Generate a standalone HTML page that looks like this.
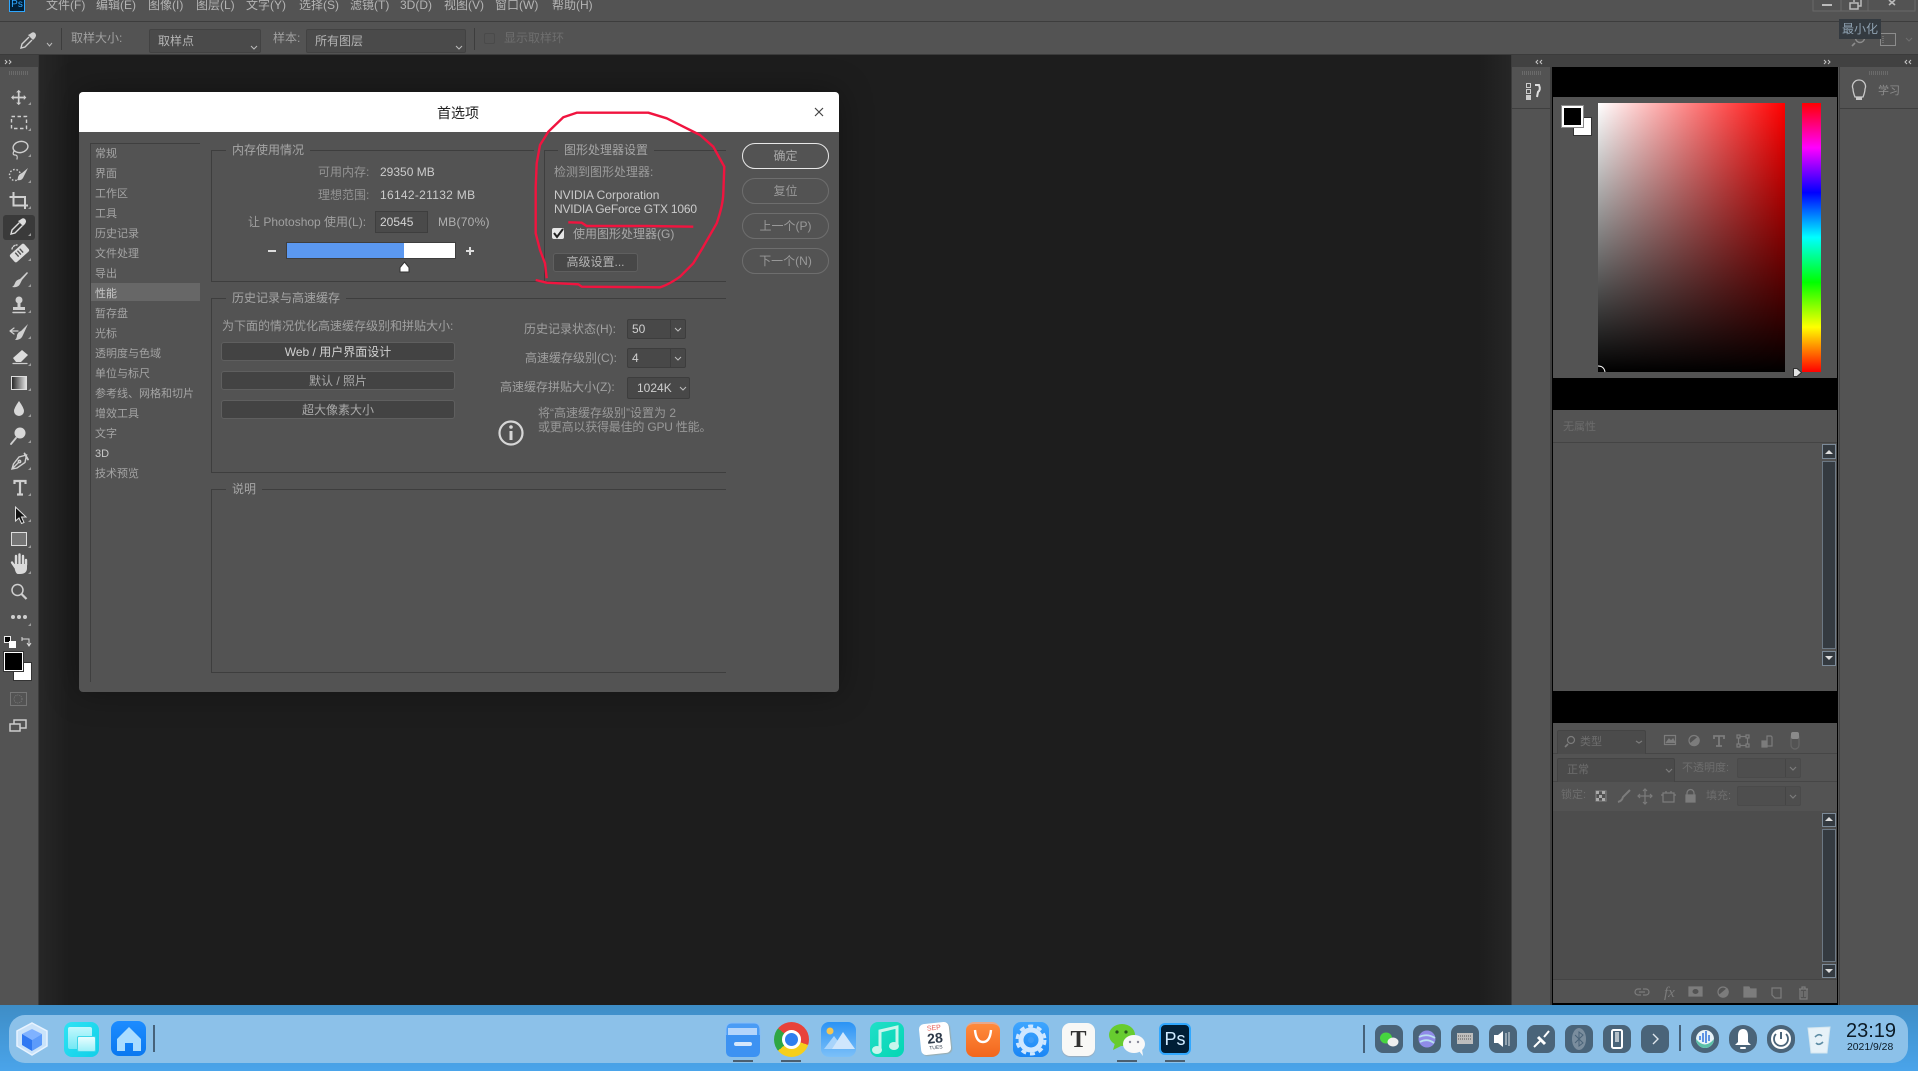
<!DOCTYPE html>
<html lang="zh"><head><meta charset="utf-8"><title>首选项</title>
<style>
html,body{margin:0;padding:0;width:1918px;height:1071px;overflow:hidden;background:#1e1e1e}
body{font-family:"Liberation Sans","Noto Sans CJK SC",sans-serif;font-size:12px;color:#a8a8a8;position:relative}
div{box-sizing:border-box}
.a{position:absolute}
.t{position:absolute;white-space:nowrap;line-height:16px;height:16px}
.m{color:#b4b4b4;top:-3px;font-size:12px}
.b{color:#cbcbcb}
.d{color:#6e6e6e}
.li{left:95px;font-size:11px;color:#a4a4a4;margin-top:1px}
.box{position:absolute;border:1px solid #3e3e3e;border-right:0}
.lg{background:#535353;padding:0 6px;color:#a6a6a6}
.btn{position:absolute;left:742px;width:87px;height:26px;border:1px solid #6e6e6e;border-radius:13px;text-align:center;line-height:24px;color:#999;font-size:12px}
.pb{position:absolute;left:221px;width:234px;height:19px;background:#434343;border:1px solid #5f5f5f;border-radius:3px;text-align:center;line-height:18px;color:#aaa;font-size:12px}
.cb{position:absolute;background:#484848;border:1px solid #3d3d3d;border-radius:2px;color:#cfcfcf;line-height:18px;padding-left:4px}
.dd{position:absolute;background:#4b4b4b;border:1px solid #444;border-bottom:0;border-radius:2px 2px 0 0}
.tile{position:absolute;top:1025px;width:28px;height:28px;background:#4a6479;border-radius:8px}
.ic{position:absolute;top:1022px;width:35px;height:35px;border-radius:8px}
.dash{position:absolute;top:1060px;width:20px;height:2px;background:#4b5f70}
</style></head><body>

<!-- top bars -->
<div class="a" style="left:0;top:0;width:1918px;height:21px;background:#535353"></div>
<div class="a" style="left:0;top:21px;width:1918px;height:1px;background:#3d3d3d"></div>
<div class="a" style="left:0;top:22px;width:1918px;height:33px;background:#535353"></div>
<div class="a" style="left:0;top:54px;width:1918px;height:1px;background:#3b3b3b"></div>

<div class="a" style="left:9px;top:-2px;width:16px;height:14px;background:#001e36;border:1px solid #2fa7ff;color:#2fa7ff;font-size:10px;line-height:12px;text-align:center">Ps</div>
<div class="t m" style="left:46px">文件(F)</div>
<div class="t m" style="left:96px">编辑(E)</div>
<div class="t m" style="left:148px">图像(I)</div>
<div class="t m" style="left:196px">图层(L)</div>
<div class="t m" style="left:246px">文字(Y)</div>
<div class="t m" style="left:299px">选择(S)</div>
<div class="t m" style="left:350px">滤镜(T)</div>
<div class="t m" style="left:400px">3D(D)</div>
<div class="t m" style="left:444px">视图(V)</div>
<div class="t m" style="left:495px">窗口(W)</div>
<div class="t m" style="left:552px">帮助(H)</div>

<!-- options bar -->
<div class="a" style="left:61px;top:28px;width:1px;height:22px;background:#3d3d3d"></div>
<div class="t" style="left:71px;top:30px;color:#a0a0a0">取样大小:</div>
<div class="a" style="left:149px;top:29px;width:112px;height:24px;background:#4a4a4a;border:1px solid #424242;border-radius:2px"></div>
<div class="t" style="left:158px;top:33px;color:#b4b4b4">取样点</div>
<div class="t" style="left:273px;top:30px;color:#a0a0a0">样本:</div>
<div class="a" style="left:306px;top:29px;width:160px;height:24px;background:#4a4a4a;border:1px solid #424242;border-radius:2px"></div>
<div class="t" style="left:315px;top:33px;color:#b4b4b4">所有图层</div>
<div class="a" style="left:474px;top:28px;width:1px;height:22px;background:#3d3d3d"></div>
<div class="a" style="left:484px;top:33px;width:11px;height:11px;border:1px solid #4a4a4a;border-radius:2px"></div>
<div class="t d" style="left:504px;top:30px">显示取样环</div>

<!-- toolbar -->
<div class="a" style="left:0;top:55px;width:38px;height:951px;background:#535353"></div>
<div class="a" style="left:0;top:55px;width:38px;height:12px;background:#414141"></div>
<div class="a" style="left:38px;top:55px;width:1px;height:951px;background:#3b3b3b"></div>
<div class="a" style="left:9px;top:71px;width:20px;height:4px;background:repeating-linear-gradient(90deg,#6a6a6a 0 1px,transparent 1px 2px)"></div>
<div class="a" style="left:3px;top:215px;width:32px;height:25px;background:#3a3a3a;border-radius:3px"></div>
<div class="a" style="left:4px;top:636px;width:7px;height:7px;background:#000;border:1px solid #eee"></div>
<div class="a" style="left:9px;top:641px;width:7px;height:7px;background:#fff"></div>
<div class="a" style="left:13px;top:662px;width:19px;height:19px;background:#fff;border:1px solid #333"></div>
<div class="a" style="left:4px;top:652px;width:19px;height:19px;background:#000;border:1px solid #fff;outline:1px solid #333"></div>
<div class="a" style="left:10px;top:692px;width:17px;height:14px;border:1px solid #767676"></div>

<!-- canvas -->
<div class="a" style="left:39px;top:55px;width:1472px;height:951px;background:linear-gradient(90deg,#272727 0,#1d1d1d 30px,#1d1d1d 1440px,#262626 100%)"></div>

<!-- dialog -->
<div class="a" style="left:79px;top:92px;width:760px;height:600px;background:#535353;border-radius:4px;box-shadow:0 0 32px rgba(0,0,0,.35);overflow:hidden">
 <div class="a" style="left:0;top:0;width:760px;height:40px;background:#fff"></div>
</div>
<div class="t" style="left:437px;top:104px;color:#222;font-size:14px;line-height:18px;height:18px">首选项</div>

<!-- list -->
<div class="a" style="left:90px;top:143px;width:110px;height:1px;background:#3f3f3f"></div>
<div class="a" style="left:90px;top:143px;width:1px;height:539px;background:#3f3f3f"></div>
<div class="a" style="left:91px;top:283px;width:109px;height:18px;background:#676767"></div>
<div class="t li" style="top:145px">常规</div>
<div class="t li" style="top:165px">界面</div>
<div class="t li" style="top:185px">工作区</div>
<div class="t li" style="top:205px">工具</div>
<div class="t li" style="top:225px">历史记录</div>
<div class="t li" style="top:245px">文件处理</div>
<div class="t li" style="top:265px">导出</div>
<div class="t li" style="top:285px;color:#c8c8c8">性能</div>
<div class="t li" style="top:305px">暂存盘</div>
<div class="t li" style="top:325px">光标</div>
<div class="t li" style="top:345px">透明度与色域</div>
<div class="t li" style="top:365px">单位与标尺</div>
<div class="t li" style="top:385px">参考线、网格和切片</div>
<div class="t li" style="top:405px">增效工具</div>
<div class="t li" style="top:425px">文字</div>
<div class="t li" style="top:445px;color:#c8c8c8">3D</div>
<div class="t li" style="top:465px">技术预览</div>

<!-- memory -->
<div class="box" style="left:211px;top:150px;width:515px;height:132px;border-left:1px solid #3e3e3e"></div>
<div class="a" style="left:534px;top:149px;width:11px;height:3px;background:#535353"></div>
<div class="a" style="left:544px;top:150px;width:1px;height:131px;background:#3e3e3e"></div>
<div class="t lg" style="left:226px;top:142px">内存使用情况</div>
<div class="t lg" style="left:558px;top:142px">图形处理器设置</div>
<div class="t" style="left:318px;top:164px;color:#939393">可用内存:</div>
<div class="t b" style="left:380px;top:164px">29350 MB</div>
<div class="t" style="left:318px;top:187px;color:#939393">理想范围:</div>
<div class="t b" style="left:380px;top:187px;letter-spacing:.3px">16142-21132 MB</div>
<div class="t" style="left:248px;top:214px;color:#a0a0a0">让 Photoshop 使用(L):</div>
<div class="a" style="left:375px;top:211px;width:53px;height:22px;background:#4a4a4a;border:1px solid #3e3e3e;color:#d4d4d4;line-height:20px;padding-left:4px">20545</div>
<div class="t" style="left:438px;top:214px;color:#b0b0b0;letter-spacing:.25px">MB(70%)</div>
<div class="a" style="left:286px;top:242px;width:170px;height:17px;background:#fff;border:1px solid #3e3e3e"></div>
<div class="a" style="left:287px;top:243px;width:117px;height:15px;background:#5b98f0"></div>

<!-- gpu -->
<div class="t" style="left:554px;top:164px;color:#9c9c9c">检测到图形处理器:</div>
<div class="t b" style="left:554px;top:187px">NVIDIA Corporation</div>
<div class="t b" style="left:554px;top:201px;letter-spacing:-.2px">NVIDIA GeForce GTX 1060</div>
<div class="a" style="left:552px;top:228px;width:12px;height:11px;background:#e6e6e6;border-radius:2px"></div>
<div class="t" style="left:573px;top:226px;color:#a8a8a8">使用图形处理器(G)</div>
<div class="a" style="left:553px;top:253px;width:85px;height:19px;background:#474747;border:1px solid #5f5f5f;border-radius:3px;text-align:center;line-height:17px;color:#b4b4b4">高级设置...</div>

<!-- right buttons -->
<div class="btn" style="top:143px;border-color:#e8e8e8;color:#a8a8a8">确定</div>
<div class="btn" style="top:178px">复位</div>
<div class="btn" style="top:213px">上一个(P)</div>
<div class="btn" style="top:248px">下一个(N)</div>

<!-- history -->
<div class="box" style="left:211px;top:298px;width:515px;height:175px"></div>
<div class="t lg" style="left:226px;top:290px">历史记录与高速缓存</div>
<div class="t" style="left:222px;top:318px;color:#a0a0a0">为下面的情况优化高速缓存级别和拼贴大小:</div>
<div class="pb" style="top:342px;color:#d0d0d0">Web / 用户界面设计</div>
<div class="pb" style="top:371px">默认 / 照片</div>
<div class="pb" style="top:400px">超大像素大小</div>
<div class="t" style="left:524px;top:321px;color:#a0a0a0">历史记录状态(H):</div>
<div class="t" style="left:525px;top:350px;color:#a0a0a0">高速缓存级别(C):</div>
<div class="t" style="left:500px;top:379px;color:#a0a0a0">高速缓存拼贴大小(Z):</div>
<div class="cb" style="left:627px;top:319px;width:59px;height:20px">50</div>
<div class="cb" style="left:627px;top:348px;width:59px;height:20px">4</div>
<div class="cb" style="left:627px;top:377px;width:63px;height:22px;padding-left:9px;line-height:20px">1024K</div>
<div class="a" style="left:670px;top:320px;width:1px;height:18px;background:#3d3d3d"></div>
<div class="a" style="left:670px;top:349px;width:1px;height:18px;background:#3d3d3d"></div>
<div class="t" style="left:538px;top:405px;color:#999">将“高速缓存级别”设置为 2</div>
<div class="t" style="left:538px;top:419px;color:#999;letter-spacing:-.2px">或更高以获得最佳的 GPU 性能。</div>

<!-- description -->
<div class="box" style="left:211px;top:489px;width:515px;height:184px"></div>
<div class="t lg" style="left:226px;top:481px">说明</div>

<!-- right dock -->
<div class="a" style="left:1511px;top:55px;width:407px;height:951px;background:#535353"></div>
<div class="a" style="left:1511px;top:55px;width:407px;height:12px;background:#414141"></div>
<div class="a" style="left:1511px;top:55px;width:1px;height:951px;background:#3b3b3b"></div>
<div class="a" style="left:1550px;top:67px;width:2px;height:939px;background:#3f3f3f"></div>
<div class="a" style="left:1839px;top:67px;width:1px;height:939px;background:#3f3f3f"></div>
<div class="a" style="left:1512px;top:108px;width:38px;height:1px;background:#3f3f3f"></div>
<div class="a" style="left:1840px;top:108px;width:78px;height:1px;background:#3f3f3f"></div>
<div class="a" style="left:1522px;top:71px;width:20px;height:4px;background:repeating-linear-gradient(90deg,#6a6a6a 0 1px,transparent 1px 2px)"></div>
<div class="a" style="left:1869px;top:71px;width:20px;height:4px;background:repeating-linear-gradient(90deg,#6a6a6a 0 1px,transparent 1px 2px)"></div>
<div class="t" style="left:1878px;top:83px;color:#8e8e8e;font-size:11px">学习</div>

<!-- center panels -->
<div class="a" style="left:1552px;top:67px;width:286px;height:938px;background:#000"></div>
<div class="a" style="left:1553px;top:97px;width:284px;height:281px;background:#535353"></div>
<div class="a" style="left:1553px;top:410px;width:284px;height:281px;background:#535353"></div>
<div class="a" style="left:1553px;top:442px;width:284px;height:1px;background:#444"></div>
<div class="a" style="left:1553px;top:723px;width:284px;height:280px;background:#535353"></div>

<!-- colour -->
<div class="a" style="left:1573px;top:117px;width:19px;height:19px;background:#fff;border:1px solid #333"></div>
<div class="a" style="left:1562px;top:106px;width:21px;height:21px;background:#000;border:2px solid #fff;outline:1px solid #8a8a8a"></div>
<div class="a" style="left:1598px;top:103px;width:187px;height:269px;background:linear-gradient(180deg,transparent,#000),linear-gradient(90deg,#fff,#f00)"></div>
<div class="a" style="left:1802px;top:103px;width:19px;height:269px;background:linear-gradient(180deg,#f00 0,#f0f 16.67%,#00f 33.33%,#0ff 50%,#0f0 66.67%,#ff0 83.33%,#f00 100%)"></div>

<!-- properties -->
<div class="t" style="left:1563px;top:419px;color:#6c6c6c;font-size:11px">无属性</div>
<div class="a" style="left:1822px;top:444px;width:14px;height:15px;background:#343a40;border:1px solid #7c8a98"></div>
<div class="a" style="left:1822px;top:461px;width:14px;height:188px;background:#343a40;border:1px solid #6c7884"></div>
<div class="a" style="left:1822px;top:651px;width:14px;height:15px;background:#343a40;border:1px solid #7c8a98"></div>

<!-- layers -->
<div class="a" style="left:1553px;top:753px;width:284px;height:1px;background:#464646"></div>
<div class="dd" style="left:1557px;top:730px;width:89px;height:24px"></div>
<div class="t d" style="left:1580px;top:734px;font-size:11px">类型</div>
<div class="a" style="left:1553px;top:781px;width:284px;height:1px;background:#464646"></div>
<div class="dd" style="left:1557px;top:758px;width:118px;height:24px"></div>
<div class="t d" style="left:1567px;top:762px;font-size:11px">正常</div>
<div class="t d" style="left:1682px;top:760px;font-size:11px">不透明度:</div>
<div class="a" style="left:1737px;top:758px;width:64px;height:20px;background:#4e4e4e;border:1px solid #4a4a4a;border-radius:2px"></div>
<div class="a" style="left:1785px;top:759px;width:1px;height:18px;background:#454545"></div>
<div class="t d" style="left:1561px;top:787px;font-size:11px">锁定:</div>
<div class="t d" style="left:1706px;top:788px;font-size:11px">填充:</div>
<div class="a" style="left:1737px;top:786px;width:64px;height:20px;background:#4e4e4e;border:1px solid #4a4a4a;border-radius:2px"></div>
<div class="a" style="left:1785px;top:787px;width:1px;height:18px;background:#454545"></div>
<div class="a" style="left:1553px;top:811px;width:284px;height:168px;background:#4d4d4d"></div>
<div class="a" style="left:1553px;top:979px;width:284px;height:1px;background:#444"></div>
<div class="a" style="left:1822px;top:813px;width:14px;height:14px;background:#343a40;border:1px solid #7c8a98"></div>
<div class="a" style="left:1822px;top:829px;width:14px;height:133px;background:#343a40;border:1px solid #6c7884"></div>
<div class="a" style="left:1822px;top:964px;width:14px;height:14px;background:#343a40;border:1px solid #7c8a98"></div>

<!-- dock -->
<div class="a" style="left:0;top:1005px;width:1918px;height:66px;background:linear-gradient(180deg,#3e8dc6,#4aa4ea)"></div>
<div class="a" style="left:9px;top:1015px;width:1899px;height:48px;background:#8cc1e9;border-radius:16px"></div>
<div class="a" style="left:153px;top:1025px;width:2px;height:27px;background:#46627a"></div>
<div class="a" style="left:1363px;top:1025px;width:2px;height:28px;background:#46627a"></div>
<div class="a" style="left:1679px;top:1025px;width:2px;height:26px;background:#46627a"></div>

<div class="ic" style="left:64px;background:linear-gradient(135deg,#2fe2f4,#11cfe8)"></div>
<div class="a" style="left:68px;top:1027px;width:24px;height:22px;background:linear-gradient(180deg,#d3fbff,#7ceaf5);border-radius:2px;opacity:.9"></div>
<div class="a" style="left:77px;top:1036px;width:19px;height:16px;background:linear-gradient(180deg,#e8fdff,#9ef0f8);border-radius:2px;border:1px solid #3ed8ea"></div>
<div class="ic" style="left:111px;top:1021px;background:linear-gradient(180deg,#1d8cff,#0a78f0)"></div>

<div class="ic" style="left:821px;background:linear-gradient(180deg,#2b93f5,#7cc0f8)"></div>
<div class="ic" style="left:870px;width:34px;background:linear-gradient(135deg,#21dfc8,#04d6b4)"></div>
<div class="ic" style="left:966px;width:34px;background:linear-gradient(180deg,#ff8b3c,#f2661d);border-top:2px solid #e8a88a"></div>
<div class="ic" style="left:1013px;width:36px;background:linear-gradient(180deg,#3fa6ff,#1b86f5)"></div>
<div class="a" style="left:774px;top:1022px;width:35px;height:35px;border-radius:50%;background:conic-gradient(from 0deg,#e8423a 0 30%,#f6cf1c 30% 64%,#2ea644 64% 86%,#e8423a 86%)"></div>
<div class="a" style="left:782px;top:1030px;width:19px;height:19px;border-radius:50%;background:#2f7fef;border:3px solid #fff"></div>

<div class="a" style="left:920px;top:1023px;width:30px;height:31px;background:#fff;border-radius:5px;transform:rotate(-6deg);box-shadow:1px 1px 1px #9aa;text-align:center;color:#2d3a4a;line-height:1">
 <div style="font-size:7px;color:#e8605a;margin-top:2px">SEP</div>
 <div style="font-size:14px;font-weight:bold;margin-top:-1px">28</div>
 <div style="font-size:5px;margin-top:1px">TUES</div>
</div>
<div class="ic" style="left:1062px;top:1023px;width:33px;height:33px;background:#f8f8f6;box-shadow:0 1px 1px #9ab"></div>
<div class="a" style="left:1062px;top:1027px;width:33px;text-align:center;font-family:'Liberation Serif',serif;font-weight:bold;font-size:24px;line-height:26px;color:#333">T</div>
<div class="a" style="left:1159px;top:1023px;width:32px;height:32px;background:#001e36;border:2px solid #31a8ff;border-radius:6px;color:#cfeaff;font-size:18px;line-height:28px;text-align:center">Ps</div>

<div class="dash" style="left:733px"></div><div class="dash" style="left:781px"></div>
<div class="dash" style="left:1117px"></div><div class="dash" style="left:1165px"></div>

<div class="tile" style="left:1375px"></div><div class="tile" style="left:1413px"></div>
<div class="tile" style="left:1451px"></div><div class="tile" style="left:1489px"></div>
<div class="tile" style="left:1527px"></div><div class="tile" style="left:1565px"></div>
<div class="tile" style="left:1603px"></div><div class="tile" style="left:1641px"></div>
<div class="tile" style="left:1691px;border-radius:50%/45%"></div>
<div class="tile" style="left:1729px;border-radius:50%/45%"></div>
<div class="tile" style="left:1767px;border-radius:50%/45%"></div>

<div class="t" style="left:1846px;top:1019px;width:50px;height:24px;font-size:20px;line-height:24px;color:#0b1a26">23:19</div>
<div class="t" style="left:1847px;top:1041px;width:48px;height:14px;font-size:10.4px;line-height:14px;color:#0b1a26">2021/9/28</div>

<!-- icon overlay -->
<svg class="a" style="left:0;top:0;z-index:5" width="1918" height="1071" viewBox="0 0 1918 1071" fill="none">
 <!-- options eyedropper + chevrons -->
 <g transform="translate(0,-186)">
  <path d="M30 220Q33 217 35 219Q37 221 35 224L33 226L28 221Z" fill="#cfcfcf"/>
  <path d="M29 223L22 230L21 234L25 233L32 226" stroke="#cfcfcf" stroke-width="1.4"/>
 </g>
 <g stroke="#bcbcbc" fill="none"><path d="M47 47L49.5 50L52 47M251 50L254 53L257 50M456 50L459 53L462 50" transform="translate(0,-4)"/></g>
 <!-- panel arrows -->
 <g stroke="#c8c8c8"><path d="M5 60L7 62L5 64M9 60L11 62L9 64M1542 60L1540 62L1542 64M1538 60L1536 62L1538 64M1824 60L1826 62L1824 64M1828 60L1830 62L1828 64M1911 60L1909 62L1911 64M1907 60L1905 62L1907 64"/></g>
 <!-- tools -->
 <g stroke="#cfcfcf" fill="none" stroke-width="1.4" stroke-linecap="round">
  <path transform="translate(18.7,97.5) scale(.85)" fill="#cfcfcf" stroke="none" d="M0-9L3-6H1V-1H6V-3L9 0L6 3V1H1V6H3L0 9L-3 6H-1V1H-6V3L-9 0L-6-3V-1H-1V-6H-3Z"/>
  <rect x="11.5" y="116.5" width="15" height="12" stroke-dasharray="3.5 2.5" stroke-linecap="butt"/>
  <ellipse cx="20.5" cy="147" rx="7.5" ry="5.5" transform="rotate(-12 20.5 147)"/><path d="M14 151Q12 155 15 155T17 159" stroke-width="1.2"/>
  <circle cx="15" cy="175" r="5.5" stroke-dasharray="1.6 1.8" stroke-linecap="butt"/>
  <path d="M28 168L22 173Q19 174 18 177Q18 179 17 180Q21 181 23 178L24 176Z" fill="#cfcfcf" stroke="none"/>
  <path d="M9.5 197H25V209M13.5 192V205.5H28" stroke-width="2" stroke-linecap="butt"/>
  <path d="M20 220Q23 217 25 219Q27 221 25 224L23 226L18 221Z" fill="#dcdcdc" stroke="none"/>
  <path d="M19 223L12 230L11 234L15 233L22 226" stroke="#dcdcdc" stroke-width="1.4"/>
  <g transform="rotate(-42 19.5 253)"><rect x="10" y="248" width="19" height="10" rx="2" fill="#dcdcdc" stroke="none"/><path d="M16.5 250.5V255.5M19.5 250.5V255.5M22.5 250.5V255.5" stroke="#535353" stroke-width="1.4" stroke-dasharray="1.5 1"/></g>
  <path d="M12 249A5 5 0 0 1 17 245" stroke-dasharray="1.5 1.5"/>
  <path d="M27 272L20 279Q16 280 15 283Q14 286 12 287Q18 288 20 284Q21 282 22 280L28 273Z" fill="#cfcfcf" stroke="none"/>
  <circle cx="19" cy="300" r="3.5" fill="#cfcfcf" stroke="none"/>
  <path d="M17.5 302H20.5V307H17.5Z" fill="#cfcfcf" stroke="none"/>
  <rect x="13" y="307" width="12" height="3" fill="#cfcfcf" stroke="none"/><path d="M13 312.5H25" stroke-width="1.4"/>
  <path d="M28 324L21 331Q18 332 17 335Q17 338 15 340Q20 340 22 337L23 335Z" fill="#cfcfcf" stroke="none"/>
  <path d="M10 331H18M10 331L14 328M10 331L14 334" stroke-width="1.2"/>
  <path d="M22 350L28 355L21 362H16L13 358Z" fill="#dcdcdc" stroke="none"/><path d="M13 363.5H27" stroke-width="1.2"/>
  <path d="M19 401Q14 408 14 411A5 5 0 0 0 24 411Q24 408 19 401Z" fill="#d8d8d8" stroke="none"/>
  <circle cx="20" cy="433" r="5.5" fill="#d8d8d8" stroke="none"/><path d="M16 438L11 444" stroke-width="1.8"/>
  <path d="M26.5 455L19 457L13.5 464L12 469L17 468L25 462.5ZM12.5 468.5L19 462"/><circle cx="19.5" cy="461.5" r="1.2"/><path d="M24.5 453.5L28 459.5" stroke-width="1.8"/>
  <path d="M14.5 484V481H25.5V484M20 481V494M17 494.5H23" stroke-width="2.2" stroke-linecap="butt"/>
 </g>
 <path d="M15.5 507V521L19 518L21.5 523.5L24 522.5L21.5 517H26Z" fill="#111" stroke="#ddd"/>
 <defs><linearGradient id="gr" x1="0" x2="1"><stop offset="0" stop-color="#222"/><stop offset="1" stop-color="#e4e4e4"/></linearGradient></defs>
 <rect x="11.5" y="376.5" width="15" height="13" fill="url(#gr)" stroke="#ddd"/>
 <rect x="11.5" y="532.5" width="15" height="13" fill="#747474" stroke="#ddd"/>
 <g stroke="#dadada" stroke-width="2.4" stroke-linecap="round"><path d="M12 562.5L15 567M16 564V556M19.5 564V554.5M23 564V556M26 565V560"/></g>
 <path d="M14 564H27V568Q27 574 20 574H18Q15 574 14 564Z" fill="#dadada"/>
 <circle cx="17.5" cy="590" r="5.5" stroke="#cfcfcf" stroke-width="1.5"/><path d="M21.5 594L26.5 599" stroke="#cfcfcf" stroke-width="2.2"/>
 <g fill="#cfcfcf"><circle cx="13" cy="617" r="2"/><circle cx="19" cy="617" r="2"/><circle cx="25" cy="617" r="2"/></g>
 <path d="M22 639H29V645M27 643L29 646L31 643M22 637V641" stroke="#ddd" fill="none"/>
 <circle cx="18" cy="699" r="4" stroke="#777" stroke-dasharray="1 1"/>
 <rect x="14" y="720" width="12" height="8" stroke="#ccc" stroke-width="1.5"/><rect x="10" y="724" width="10" height="7" fill="#535353" stroke="#ccc" stroke-width="1.5"/>
 <!-- tool corner triangles -->
 <g fill="#9c9c9c">
  <path d="M31 105v-3l-3 3ZM31 131v-3l-3 3ZM31 157v-3l-3 3ZM31 183v-3l-3 3ZM31 209v-3l-3 3ZM31 236v-3l-3 3ZM31 261v-3l-3 3ZM31 287v-3l-3 3ZM31 313v-3l-3 3ZM31 339v-3l-3 3ZM31 366v-3l-3 3ZM31 391v-3l-3 3ZM31 417v-3l-3 3ZM31 443v-3l-3 3ZM31 470v-3l-3 3ZM31 496v-3l-3 3ZM31 522v-3l-3 3ZM31 548v-3l-3 3ZM31 574v-3l-3 3ZM31 626v-3l-3 3Z"/>
 </g>
 <!-- dialog glyphs -->
 <path d="M815 108L823 116M823 108L815 116" stroke="#444" stroke-width="1.2"/>
 <path d="M268 251H276" stroke="#ddd" stroke-width="2"/>
 <path d="M466 251H474M470 247V255" stroke="#ddd" stroke-width="2"/>
 <path d="M404.5 262L409 267.5V272H400V267.5Z" fill="#fff" stroke="#333"/>
 <path d="M554 233L557 237L563 229" stroke="#222" stroke-width="2"/>
 <g stroke="#bdbdbd"><path d="M675 328L678 331L681 328M675 357L678 360L681 357M680 387L683 390L686 387"/></g>
 <circle cx="511" cy="433" r="11.5" stroke="#d6d6d6" stroke-width="2.2"/>
 <path d="M511 431V440" stroke="#d6d6d6" stroke-width="3"/><circle cx="511" cy="427" r="1.8" fill="#d6d6d6"/>
 <!-- red annotation -->
 <path d="M535.7 280L546.7 282.7L578.3 284.3L581.7 286.7L660 287.3Q668 285 680 276.7L693.3 263.3L703.3 246.7L716.7 223.3Q723 205 723.3 193.3L724.3 166.7L713.3 146.7L700 135L690 130L676.7 123.3L666.7 118.3L648.3 112.7L576.7 112.7L563.3 117.3L548.3 131.7L540 145L536.7 163.3L535.7 186.7L535.7 233.3L540 250L545 263.3L546.7 278.3" stroke="#f0143f" stroke-width="2.4" stroke-linejoin="round"/>
 <path d="M568.3 222.3L581.7 222.7L586.7 226L646.7 226L693.3 226.7" stroke="#f0143f" stroke-width="2.4"/>
 <!-- window controls -->
 <path d="M1813 0V11H1915V0M1841 0V11M1868 0V11" stroke="#686868"/>
 <path d="M1822 5H1832" stroke="#bbb" stroke-width="2"/>
 <rect x="1850" y="3" width="8" height="6" stroke="#bbb" stroke-width="1.5"/><path d="M1854 2V0M1861 0V6H1858" stroke="#bbb" stroke-width="1.5"/>
 <path d="M1889 0L1895 5M1895 0L1889 5" stroke="#bbb" stroke-width="1.6"/>
 <circle cx="1860" cy="38" r="4.5" stroke="#8c8c8c" stroke-width="1.4"/><path d="M1855 43L1852 46" stroke="#8c8c8c" stroke-width="1.6"/>
 <rect x="1880.5" y="33.5" width="15" height="12" stroke="#8c8c8c"/><path d="M1883 36V43" stroke="#8c8c8c" stroke-dasharray="1 1"/>
 <path d="M1906 38L1909 41L1912 38" stroke="#6e6e6e"/>
 <!-- history / learn -->
 <g stroke="#ccc" fill="none"><rect x="1526.5" y="83.5" width="4" height="4"/><rect x="1526.5" y="89.5" width="4" height="4"/></g>
 <rect x="1526" y="95" width="5" height="5" fill="#ccc"/>
 <path d="M1535 85H1539Q1541 90 1538 92L1537 97" stroke="#ddd" stroke-width="2"/>
 <path d="M1855 97Q1853 92 1853 89A6.5 6.5 0 1 1 1865 89Q1865 92 1863 97Z" stroke="#c8c8c8" stroke-width="1.3"/>
 <path d="M1856 97H1862V100H1856Z" fill="#c8c8c8"/>
 <!-- picker marks -->
 <path d="M1598 366Q1604 366 1605 372" stroke="#fff"/>
 <path d="M1793.5 368.5H1797L1801.5 372.5L1797 376.5H1793.5Z" fill="#e4e4e4" stroke="#333"/>
 <!-- scroll arrows -->
 <g fill="#ddd"><path d="M1825 454L1829 450L1833 454ZM1825 656L1829 660L1833 656ZM1825 821L1829 817L1833 821ZM1825 969L1829 973L1833 969Z"/></g>
 <!-- layers icons -->
 <g stroke="#7c7c7c" fill="none" stroke-width="1.2">
  <circle cx="1571" cy="740" r="3.5"/><path d="M1568 744L1565 747" stroke-width="1.6"/>
  <path d="M1636 741L1639 743L1642 741M1666 769L1669 772L1672 769M1790 767L1793 770L1796 767M1790 795L1793 798L1796 795"/>
  <rect x="1664.5" y="735.5" width="11" height="9"/>
  <path d="M1666 743L1669 739L1671 741L1673 739L1675 743" fill="#7c7c7c"/>
  <circle cx="1694" cy="740.5" r="5"/><path d="M1698 737.2A5 5 0 0 1 1690.2 743.8Z" fill="#7c7c7c"/>
  <path d="M1714 739V736H1724V739M1719 736V746M1716 746H1722" stroke-width="1.8"/>
  <rect x="1738.5" y="736.5" width="9" height="9"/><path d="M1737 735h3v3h-3ZM1746 735h3v3h-3ZM1737 744h3v3h-3ZM1746 744h3v3h-3Z" fill="#535353"/>
  <path d="M1767 736H1771L1772 737V746H1767Z"/><rect x="1762" y="741" width="5" height="6" fill="#7c7c7c"/>
  <rect x="1791" y="733" width="8" height="16" rx="4" stroke="#666"/>
  <rect x="1791" y="732" width="8" height="7" rx="2" fill="#8a8a8a" stroke="none"/>
  <rect x="1596" y="791" width="10" height="10"/><path d="M1596 791h3v3h-3ZM1602 791h3v3h-3ZM1599 795h3v3h-3ZM1596 798h3v3h-3ZM1602 798h3v3h-3Z" fill="#aaa" stroke="none"/>
  <path d="M1618 802Q1622 801 1623 797L1630 790" stroke-width="2"/>
  <path d="M1645 790V803M1639 796H1652"/><path d="M1643 791L1645 789L1647 791M1643 802L1645 804L1647 802M1640 794L1638 796L1640 798M1650 794L1652 796L1650 798" />
  <rect x="1663" y="793" width="11" height="9"/><path d="M1661 795H1663M1676 795H1674M1666 791V793M1671 791V793"/>
  <rect x="1686" y="795" width="9" height="7" fill="#7c7c7c"/><path d="M1687 795V793A3 3 0 0 1 1694 793V795"/>
  <path d="M1641 989H1638A3 3 0 0 0 1638 995H1641M1643 989H1646A3 3 0 0 1 1646 995H1643M1639 992H1645" />
  <rect x="1689" y="987" width="13" height="9" fill="#7c7c7c"/><ellipse cx="1695.5" cy="991.5" rx="3" ry="2.5" fill="#535353" stroke="none"/>
  <circle cx="1723" cy="992" r="5"/><path d="M1727 988.7A5 5 0 0 1 1719.2 995.3Z" fill="#7c7c7c"/>
  <path d="M1744 987H1749L1750 989H1756V997H1744Z" fill="#7c7c7c"/>
  <path d="M1772 988H1781V998H1775L1772 995Z"/>
  <path d="M1799 989H1808M1802 989V987H1805V989M1800 989V999H1807V989M1802 991V997M1805 991V997"/>
 </g>
 <text x="1664" y="997" font-family="Liberation Serif,serif" font-style="italic" font-size="15" fill="#7c7c7c">fx</text>

 <!-- cube -->
 <path d="M32 1023L47 1031V1046L32 1055L17 1046V1031Z" fill="#dfeeff" fill-opacity=".75" stroke="#e8f3ff" stroke-width="1.5"/>
 <path d="M32 1029L42 1034L32 1040L22 1034Z" fill="#7fb2ff"/>
 <path d="M22 1034L32 1040V1051L22 1045Z" fill="#2f78f2"/>
 <path d="M42 1034L32 1040V1051L42 1045Z" fill="#5d9bfa"/>
 <!-- home -->
 <path d="M117 1039L129 1027L141 1039V1051H133V1043H125V1051H117Z" fill="#a9dcff"/>
 <!-- folder -->
 <path d="M726 1030Q726 1023 732 1023H754Q760 1023 760 1030V1040H726Z" fill="#4a9cf5" stroke="#86bdf8"/>
 <path d="M728 1028H757V1038H728Z" fill="#b4d5fb"/>
 <path d="M726 1035H760V1051Q760 1057 754 1057H732Q726 1057 726 1051Z" fill="#3d92f2"/>
 <rect x="734" y="1042" width="18" height="4" rx="2" fill="#d6e8fc"/>
 <!-- photos -->
 <circle cx="830" cy="1031" r="3.5" fill="#f7c650"/>
 <path d="M824 1049L834 1036L844 1049Z" fill="#a8d4fb"/><path d="M832 1049L843 1032L855 1049Z" fill="#cfe6fc"/>
 <!-- music -->
 <path d="M880 1049V1031L897 1027V1045" stroke="#c8f5ec" stroke-width="3"/>
 <ellipse cx="877" cy="1050" rx="5" ry="4" fill="#c8f5ec"/><ellipse cx="894" cy="1046" rx="5" ry="4" fill="#c8f5ec"/>
 <!-- shop -->
 <path d="M975 1030Q976 1042 983 1042Q990 1042 991 1030" stroke="#fff" stroke-width="2.4"/>
 <!-- gear -->
 <circle cx="1031" cy="1040" r="10" stroke="#cfe7ff" stroke-width="5"/><circle cx="1031" cy="1040" r="14" stroke="#cfe7ff" stroke-width="3" stroke-dasharray="5 4"/>
 <circle cx="1031" cy="1040" r="3" fill="#3e9cf8"/>
 <!-- wechat -->
 <ellipse cx="1122" cy="1035" rx="13" ry="11" fill="#67cc2f"/><path d="M1115 1043L1113 1050L1121 1046Z" fill="#67cc2f"/>
 <circle cx="1117" cy="1032" r="1.6" fill="#26561a"/><circle cx="1126" cy="1032" r="1.6" fill="#26561a"/>
 <ellipse cx="1134" cy="1044" rx="11" ry="9" fill="#f8f8f8"/><path d="M1139 1051L1143 1056L1142 1049Z" fill="#f8f8f8"/>
 <circle cx="1130" cy="1042" r="1.2" fill="#889"/><circle cx="1138" cy="1042" r="1.2" fill="#889"/>
 <!-- tray -->
 <ellipse cx="1386" cy="1038" rx="6" ry="5.5" fill="#46d63f"/><ellipse cx="1393" cy="1042" rx="5.5" ry="4.5" fill="#eee"/>
 <circle cx="1427" cy="1039" r="8.5" fill="#8f8be8"/><path d="M1419 1037Q1427 1033 1435 1038M1420 1042Q1427 1038 1434 1043" stroke="#b8e0f0" stroke-width="1.8"/>
 <rect x="1457" y="1033" width="16" height="11" fill="#bdbdbd"/><path d="M1458 1036H1472M1458 1039H1472" stroke="#555" stroke-dasharray="1 1"/>
 <path d="M1494 1035H1498L1503 1031V1047L1498 1043H1494Z" fill="#fff"/><path d="M1506 1033V1045M1509 1032V1046" stroke="#dfe6ec"/>
 <path d="M1534 1047L1540 1041M1544 1037L1549 1031" stroke="#fff" stroke-width="2"/><path d="M1538 1037L1545 1044" stroke="#fff" stroke-width="3"/>
 <ellipse cx="1579" cy="1039" rx="7" ry="11" fill="#7a8d9d"/><path d="M1575 1035L1583 1043L1579 1046V1032L1583 1035L1575 1043" stroke="#4a6479"/>
 <rect x="1612" y="1030" width="10" height="18" rx="1.5" stroke="#fff" stroke-width="2"/><rect x="1615" y="1032" width="4" height="10" fill="#fff" fill-opacity=".6"/>
 <path d="M1653 1034L1658 1039L1653 1044" stroke="#dfe6ec" stroke-width="1.4"/>
 <circle cx="1705" cy="1039" r="9" fill="#e8f3f8"/><path d="M1696 1039A9 9 0 0 0 1714 1039Q1705 1050 1696 1039Z" fill="#5cc0a8"/><path d="M1700 1040V1036M1703 1042V1033M1706 1043V1031M1709 1041V1035" stroke="#3b7de0" stroke-width="1.6"/>
 <path d="M1743 1029Q1748 1029 1748 1036V1042L1751 1045H1735L1738 1042V1036Q1738 1029 1743 1029Z" fill="#fff"/><rect x="1740" y="1047" width="6" height="2" rx="1" fill="#fff"/>
 <circle cx="1781" cy="1039" r="10" fill="#fff"/><path d="M1781 1032V1039" stroke="#4a6479" stroke-width="2"/><path d="M1776 1034A7 7 0 1 0 1786 1034" stroke="#4a6479" stroke-width="1.8"/>
 <path d="M1808 1028L1830 1027L1827 1053H1811Z" fill="#e7f2f8" stroke="#d4e6ef"/>
 <path d="M1815 1037Q1819 1033 1822 1036M1823 1042Q1819 1046 1816 1043" stroke="#5e8da5" stroke-width="1.6"/>
</svg>

<!-- tooltip -->
<div class="a" style="left:1839px;top:19px;width:42px;height:20px;background:#343a40;color:#8fa2b2;font-size:12px;line-height:20px;text-align:center;z-index:6">最小化</div>
</body></html>
